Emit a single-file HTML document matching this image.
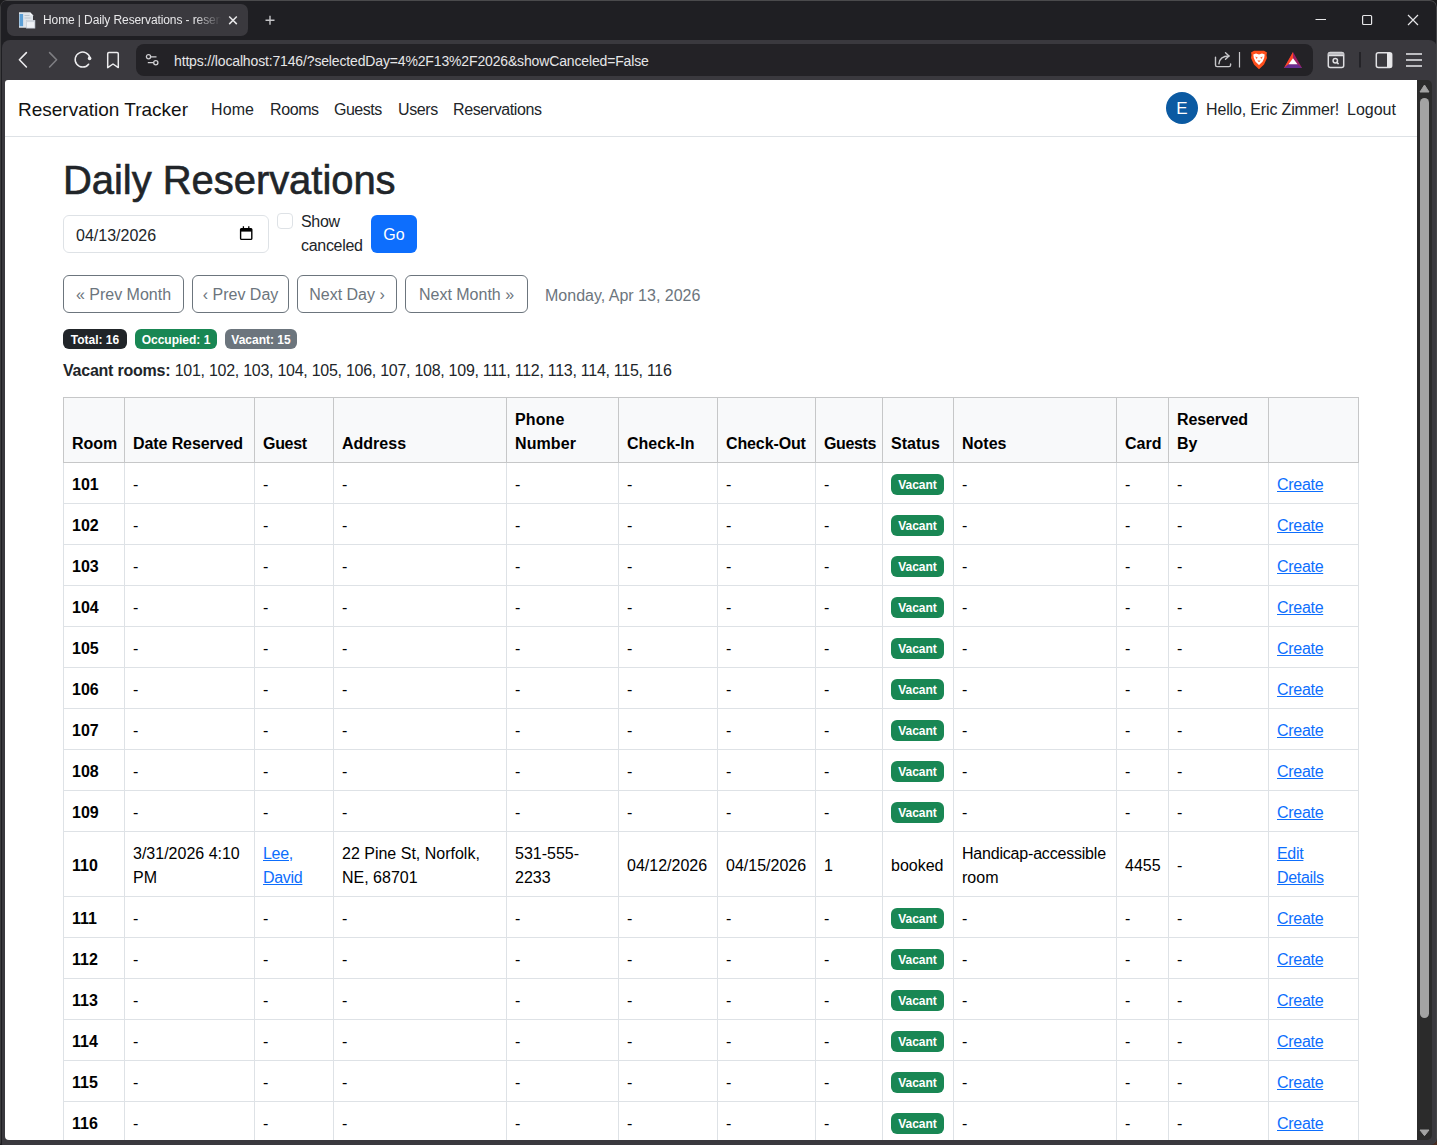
<!DOCTYPE html><html><head><meta charset="utf-8"><title>Daily Reservations</title><style>
*{box-sizing:border-box;margin:0;padding:0}
html,body{width:1437px;height:1145px;overflow:hidden;background:#1b1b1d;font-family:"Liberation Sans",sans-serif;}
.abs{position:absolute}
#win{position:absolute;left:0;top:0;width:1437px;height:1145px;background:#1f1f23;border-radius:7px 7px 7px 3px;overflow:hidden}
#wb{position:absolute;left:0;top:0;width:1437px;height:1145px;border-top:1px solid #4a4a4c;border-left:1px solid #3c3c3e;border-right:1px solid #444447;border-top-left-radius:6px;border-top-right-radius:7px;border-bottom-right-radius:7px;pointer-events:none}
#tab{position:absolute;left:7px;top:4px;width:241px;height:32px;background:#3a393e;border-radius:7px;}
#tabtitle{position:absolute;left:43px;top:13px;font-size:12px;line-height:14px;color:#e8e8ea;white-space:nowrap;width:178px;overflow:hidden;letter-spacing:-0.1px;
 -webkit-mask-image:linear-gradient(to right,#000 152px,transparent 178px);}
#toolbar{position:absolute;left:2px;top:40px;width:1435px;height:1105px;background:#3a393e;border-top-left-radius:8px;border-top-right-radius:8px;}
#url{position:absolute;left:136px;top:44px;width:1177px;height:32px;background:#232226;border-radius:8px;}
#urltext{position:absolute;left:174px;top:53px;font-size:14px;color:#e6e6e8;white-space:nowrap;letter-spacing:-0.15px}
#content{position:absolute;left:5px;top:80px;width:1412px;height:1060px;background:#fff;border-top-left-radius:3px;border-bottom-left-radius:4px;overflow:hidden}
#sb{position:absolute;left:1417px;top:80px;width:15px;height:1060px;background:#2b2b2b;border-top-right-radius:5px;border-bottom-right-radius:5px}
#thumb{position:absolute;left:3px;top:18px;width:9px;height:920px;background:#a3a3a3;border-radius:5px}
.page{position:absolute;left:-5px;top:-80px;width:1437px;height:1145px;color:#212529;font-size:16px;}
.nav a{position:absolute;top:101px;font-size:16px;color:#212529;text-decoration:none;white-space:nowrap}
.btn{position:absolute;border:1px solid #6c757d;border-radius:6px;color:#6c757d;font-size:16px;text-align:center;line-height:34px;padding-top:2px;white-space:nowrap}
.badge{position:absolute;border-radius:6px;color:#fff;font-size:12px;font-weight:bold;text-align:center;line-height:18px;padding-top:2px;height:20px;white-space:nowrap}
table{position:absolute;left:63px;top:397px;width:1296px;border-collapse:collapse;table-layout:fixed;font-size:16px;color:#000}
.t{position:relative;top:2px;display:inline-block;white-space:nowrap}
td,th{border:1px solid #dee2e6;padding:0 8px;vertical-align:middle;line-height:24px;text-align:left;}
th{background:#f8f9fa;border-color:#c6c7c8;vertical-align:bottom;padding:8px;font-weight:bold}
td{height:41px}
td.rn{font-weight:bold}
a.lk{color:#0d6efd;text-decoration:underline;text-underline-offset:1px;letter-spacing:-0.3px}
.vac{display:inline-block;position:relative;top:1px;padding-top:1px;background:#198754;color:#fff;font-size:12px;font-weight:bold;border-radius:6px;height:21px;line-height:20px;width:53px;text-align:center;vertical-align:middle}
</style></head><body>
<div class="abs" style="left:1423px;top:1131px;width:14px;height:14px;background:#4a2c20"></div><div id="win">
<div id="tab"></div>
<svg class="abs" style="left:18px;top:12px" width="18" height="17" viewBox="0 0 18 17">
<path d="M1 0.3H12L15 3.3V15.8H1Z" fill="#dfe4ea"/><path d="M12 0.3V3.3H15Z" fill="#f5f7fa"/>
<rect x="1.5" y="2" width="3.6" height="12.2" fill="#5b9fd6"/>
<rect x="6.5" y="3" width="5" height="1" fill="#b9c2cc"/><rect x="6.5" y="5.5" width="6" height="1" fill="#b9c2cc"/>
<rect x="8.6" y="8.5" width="8.3" height="7.6" fill="#eef1f5" stroke="#c3cbd4" stroke-width="0.7"/><rect x="8.6" y="8.5" width="8.3" height="1.6" fill="#cfd6de"/>
</svg>
<div id="tabtitle">Home | Daily Reservations - reservation</div>
<svg class="abs" style="left:228px;top:15px" width="10" height="10" viewBox="0 0 10 10"><path d="M1.2 1.5L8.8 9.1M8.8 1.5L1.2 9.1" stroke="#e6e6e8" stroke-width="1.5"/></svg>
<svg class="abs" style="left:265px;top:15px" width="11" height="11" viewBox="0 0 11 11"><path d="M5 0.8V9.8M0.5 5.3H9.5" stroke="#c4c4c7" stroke-width="1.4"/></svg>
<svg class="abs" style="left:1310px;top:10px" width="120" height="20" viewBox="0 0 120 20">
<path d="M5.5 9.5H16" stroke="#e6e6e8" stroke-width="1.2"/>
<rect x="52.6" y="5.5" width="9" height="9" rx="1" fill="none" stroke="#e6e6e8" stroke-width="1.2"/>
<path d="M98 5L108 15M108 5L98 15" stroke="#e6e6e8" stroke-width="1.2"/></svg>
<div id="toolbar"></div>
<div id="url"></div>
<svg class="abs" style="left:14px;top:48px" width="115" height="24" viewBox="0 0 115 24">
<path d="M12.4 4.6L5.4 11.8L12.4 19" fill="none" stroke="#ececee" stroke-width="1.6" stroke-linecap="round" stroke-linejoin="round"/>
<path d="M35.6 4.6L42.6 11.8L35.6 19" fill="none" stroke="#7e7e82" stroke-width="1.6" stroke-linecap="round" stroke-linejoin="round"/>
<path d="M76 10.04A7.5 7.5 0 1 0 74.6 16.2" fill="none" stroke="#ececee" stroke-width="1.5" stroke-linecap="round"/><circle cx="75.6" cy="10.4" r="1.8" fill="#ececee"/>
<path d="M93.7 5.7Q93.7 4.5 94.9 4.5H103.1Q104.3 4.5 104.3 5.7V19.6L99 16L93.7 19.6Z" fill="none" stroke="#ececee" stroke-width="1.5" stroke-linejoin="round"/>
</svg>
<svg class="abs" style="left:144px;top:51px" width="16" height="18" viewBox="0 0 16 18">
<circle cx="4.5" cy="5.8" r="2.1" fill="none" stroke="#d0d0d3" stroke-width="1.3"/><path d="M6.6 5.8H12.5" stroke="#d0d0d3" stroke-width="1.3"/>
<circle cx="11.8" cy="11.7" r="2.1" fill="none" stroke="#d0d0d3" stroke-width="1.3"/><path d="M3.8 11.7H9.7" stroke="#d0d0d3" stroke-width="1.3"/></svg>
<div id="urltext">https://localhost:7146/?selectedDay=4%2F13%2F2026&amp;showCanceled=False</div>
<svg class="abs" style="left:1210px;top:48px" width="220" height="24" viewBox="0 0 220 24">
<path d="M5.5 9.2V17Q5.5 18.6 7.1 18.6H19Q20.6 18.6 20.6 17V15.9" fill="none" stroke="#c8c8cb" stroke-width="1.4" stroke-linecap="round"/>
<path d="M8.9 15.9C9.3 11.2 12.5 8 19 8" fill="none" stroke="#c8c8cb" stroke-width="1.4" stroke-linecap="round"/><path d="M15.5 4.8L19 8L15.5 11.3" fill="none" stroke="#c8c8cb" stroke-width="1.4" stroke-linecap="round" stroke-linejoin="round"/>
<path d="M29.5 4V19.5" stroke="#c8c8cb" stroke-width="1.2"/>
<path d="M41 4.5L44 2.8L54 2.8L57 4.5L56.5 7L57 10L54 16.5L49 21.2L44 16.5L41 10L41.5 7Z" fill="#ff4f1c"/>
<path d="M43.3 6.5L46 5.6L49 6.4L52 5.6L54.7 6.5L54.2 10L52.5 13.8L49 17L45.5 13.8L43.8 10Z" fill="#fff"/>
<path d="M45.2 8.6L47.8 9.6L46.5 11ZM52.8 8.6L50.2 9.6L51.5 11ZM47.3 12.6H50.7L49 14.3Z" fill="#ff6a3d"/>
<path d="M83 3.9L92 19.9L74 19.9Z" fill="#9e1f63"/><path d="M83 3.9L83 10.3L78.5 16.3L74 19.9Z" fill="#ff4724"/><path d="M74 19.9L78.5 16.3H87.5L92 19.9Z" fill="#662d91"/><path d="M83 10.3L87.5 16.3H78.5Z" fill="#fff"/>
<rect x="118.3" y="4.6" width="15.4" height="14.8" rx="2" fill="none" stroke="#dedee1" stroke-width="1.5"/><rect x="118.3" y="4.6" width="15.4" height="3" fill="#bdbdc1"/><path d="M118.3 7.6H133.7" stroke="#dedee1" stroke-width="1.3"/>
<circle cx="125.3" cy="12.8" r="2.2" fill="none" stroke="#dedee1" stroke-width="1.5"/><path d="M126.9 14.4L128.6 16.1" stroke="#dedee1" stroke-width="1.5"/>
<path d="M150 4V19.5" stroke="#1f1f23" stroke-width="1.6"/>
<rect x="166.3" y="4.8" width="15.4" height="14.8" rx="2" fill="none" stroke="#e2e2e5" stroke-width="1.5"/><rect x="177" y="5" width="4.5" height="14.4" fill="#e8e8ea"/>
<path d="M196 6H212M196 12H212M196 18H212" stroke="#bdbdc1" stroke-width="1.9"/>
</svg>
<div id="content"><div class="page">
<div class="abs" style="left:0;top:136px;width:1437px;height:1px;background:#dee2e6;box-shadow:0 4px 12px rgba(0,0,0,.05)"></div>
<div class="abs" style="left:18px;top:99px;font-size:19px;white-space:nowrap;color:#111">Reservation Tracker</div>
<div class="nav">
<a style="left:211px;letter-spacing:0.1px">Home</a>
<a style="left:270px;letter-spacing:-0.4px">Rooms</a>
<a style="left:334px;letter-spacing:-0.5px">Guests</a>
<a style="left:398px;letter-spacing:-0.4px">Users</a>
<a style="left:453px;letter-spacing:-0.4px">Reservations</a>
</div>
<div class="abs" style="left:1166px;top:92px;width:32px;height:32px;border-radius:50%;background:#0b5aa2;color:#fff;font-size:17px;line-height:31px;padding-top:1px;text-align:center">E</div>
<div class="abs" style="left:1206px;top:101px;font-size:16px;letter-spacing:-0.15px;white-space:nowrap;color:#212529">Hello, Eric Zimmer!</div>
<div class="abs" style="left:1347px;top:101px;font-size:16px;white-space:nowrap;color:#212529">Logout</div>
<div class="abs" style="left:63px;top:156px;font-size:40px;line-height:48px;white-space:nowrap;color:#212529;-webkit-text-stroke:0.6px #212529;letter-spacing:-0.05px">Daily Reservations</div>
<div class="abs" style="left:63px;top:215px;width:206px;height:38px;border:1px solid #dee2e6;border-radius:6px"></div>
<div class="abs" style="left:76px;top:224px;font-size:16px;line-height:24px;white-space:nowrap">04/13/2026</div>
<svg class="abs" style="left:239px;top:226px" width="15" height="15" viewBox="0 0 15 15"><rect x="1.6" y="2.6" width="11.2" height="10.8" rx="1" fill="none" stroke="#000" stroke-width="1.4"/><rect x="1.6" y="2.6" width="11.2" height="3" fill="#000"/><path d="M4.4 0.3V3M9.8 0.3V3" stroke="#000" stroke-width="1.3"/></svg>
<div class="abs" style="left:277px;top:213px;width:16px;height:16px;border:1px solid #dee2e6;border-radius:4px"></div>
<div class="abs" style="left:301px;top:210px;font-size:16px;line-height:24px;white-space:nowrap;letter-spacing:-0.3px">Show<br>canceled</div>
<div class="abs" style="left:371px;top:215px;width:46px;height:38px;background:#0d6efd;border-radius:6px;color:#fff;font-size:16px;line-height:36px;padding-top:2px;text-align:center">Go</div>
<div class="btn" style="left:63px;top:275px;width:121px;height:38px">&laquo; Prev Month</div>
<div class="btn" style="left:192px;top:275px;width:97px;height:38px">&lsaquo; Prev Day</div>
<div class="btn" style="left:297px;top:275px;width:100px;height:38px">Next Day &rsaquo;</div>
<div class="btn" style="left:405px;top:275px;width:123px;height:38px">Next Month &raquo;</div>
<div class="abs" style="left:545px;top:284px;font-size:16px;line-height:24px;color:#6c757d;white-space:nowrap">Monday, Apr 13, 2026</div>
<div class="badge" style="left:63px;top:329px;width:64px;background:#212529">Total: 16</div>
<div class="badge" style="left:135px;top:329px;width:82px;background:#198754">Occupied: 1</div>
<div class="badge" style="left:225px;top:329px;width:72px;background:#6c757d">Vacant: 15</div>
<div class="abs" style="left:63px;top:359px;font-size:16px;line-height:24px;white-space:nowrap"><b style="letter-spacing:-0.23px">Vacant rooms:</b> <span style="letter-spacing:-0.27px">101, 102, 103, 104, 105, 106, 107, 108, 109, 111, 112, 113, 114, 115, 116</span></div>
<table><colgroup><col style="width:61px"><col style="width:130px"><col style="width:79px"><col style="width:173px"><col style="width:112px"><col style="width:99px"><col style="width:98px"><col style="width:67px"><col style="width:71px"><col style="width:163px"><col style="width:52px"><col style="width:100px"><col style="width:90px"></colgroup><thead><tr><th><span class="t" style="letter-spacing:0px">Room</span></th><th><span class="t" style="letter-spacing:-0.1px">Date Reserved</span></th><th><span class="t" style="letter-spacing:-0.3px">Guest</span></th><th><span class="t" style="letter-spacing:0px">Address</span></th><th><span class="t" style="letter-spacing:0.1px">Phone<br>Number</span></th><th><span class="t" style="letter-spacing:0px">Check-In</span></th><th><span class="t" style="letter-spacing:-0.12px">Check-Out</span></th><th><span class="t" style="letter-spacing:-0.35px">Guests</span></th><th><span class="t" style="letter-spacing:0px">Status</span></th><th><span class="t" style="letter-spacing:0px">Notes</span></th><th><span class="t" style="letter-spacing:0px">Card</span></th><th><span class="t" style="letter-spacing:-0.15px">Reserved<br>By</span></th><th></th></tr></thead><tbody><tr><td class="rn"><span class="t">101</span></td><td><span class="t">-</span></td><td><span class="t">-</span></td><td><span class="t">-</span></td><td><span class="t">-</span></td><td><span class="t">-</span></td><td><span class="t">-</span></td><td><span class="t">-</span></td><td><span class="vac">Vacant</span></td><td><span class="t">-</span></td><td><span class="t">-</span></td><td><span class="t">-</span></td><td><span class="t"><a class="lk">Create</a></span></td></tr><tr><td class="rn"><span class="t">102</span></td><td><span class="t">-</span></td><td><span class="t">-</span></td><td><span class="t">-</span></td><td><span class="t">-</span></td><td><span class="t">-</span></td><td><span class="t">-</span></td><td><span class="t">-</span></td><td><span class="vac">Vacant</span></td><td><span class="t">-</span></td><td><span class="t">-</span></td><td><span class="t">-</span></td><td><span class="t"><a class="lk">Create</a></span></td></tr><tr><td class="rn"><span class="t">103</span></td><td><span class="t">-</span></td><td><span class="t">-</span></td><td><span class="t">-</span></td><td><span class="t">-</span></td><td><span class="t">-</span></td><td><span class="t">-</span></td><td><span class="t">-</span></td><td><span class="vac">Vacant</span></td><td><span class="t">-</span></td><td><span class="t">-</span></td><td><span class="t">-</span></td><td><span class="t"><a class="lk">Create</a></span></td></tr><tr><td class="rn"><span class="t">104</span></td><td><span class="t">-</span></td><td><span class="t">-</span></td><td><span class="t">-</span></td><td><span class="t">-</span></td><td><span class="t">-</span></td><td><span class="t">-</span></td><td><span class="t">-</span></td><td><span class="vac">Vacant</span></td><td><span class="t">-</span></td><td><span class="t">-</span></td><td><span class="t">-</span></td><td><span class="t"><a class="lk">Create</a></span></td></tr><tr><td class="rn"><span class="t">105</span></td><td><span class="t">-</span></td><td><span class="t">-</span></td><td><span class="t">-</span></td><td><span class="t">-</span></td><td><span class="t">-</span></td><td><span class="t">-</span></td><td><span class="t">-</span></td><td><span class="vac">Vacant</span></td><td><span class="t">-</span></td><td><span class="t">-</span></td><td><span class="t">-</span></td><td><span class="t"><a class="lk">Create</a></span></td></tr><tr><td class="rn"><span class="t">106</span></td><td><span class="t">-</span></td><td><span class="t">-</span></td><td><span class="t">-</span></td><td><span class="t">-</span></td><td><span class="t">-</span></td><td><span class="t">-</span></td><td><span class="t">-</span></td><td><span class="vac">Vacant</span></td><td><span class="t">-</span></td><td><span class="t">-</span></td><td><span class="t">-</span></td><td><span class="t"><a class="lk">Create</a></span></td></tr><tr><td class="rn"><span class="t">107</span></td><td><span class="t">-</span></td><td><span class="t">-</span></td><td><span class="t">-</span></td><td><span class="t">-</span></td><td><span class="t">-</span></td><td><span class="t">-</span></td><td><span class="t">-</span></td><td><span class="vac">Vacant</span></td><td><span class="t">-</span></td><td><span class="t">-</span></td><td><span class="t">-</span></td><td><span class="t"><a class="lk">Create</a></span></td></tr><tr><td class="rn"><span class="t">108</span></td><td><span class="t">-</span></td><td><span class="t">-</span></td><td><span class="t">-</span></td><td><span class="t">-</span></td><td><span class="t">-</span></td><td><span class="t">-</span></td><td><span class="t">-</span></td><td><span class="vac">Vacant</span></td><td><span class="t">-</span></td><td><span class="t">-</span></td><td><span class="t">-</span></td><td><span class="t"><a class="lk">Create</a></span></td></tr><tr><td class="rn"><span class="t">109</span></td><td><span class="t">-</span></td><td><span class="t">-</span></td><td><span class="t">-</span></td><td><span class="t">-</span></td><td><span class="t">-</span></td><td><span class="t">-</span></td><td><span class="t">-</span></td><td><span class="vac">Vacant</span></td><td><span class="t">-</span></td><td><span class="t">-</span></td><td><span class="t">-</span></td><td><span class="t"><a class="lk">Create</a></span></td></tr><tr style="height:65px"><td class="rn"><span class="t">110</span></td><td><span class="t">3/31/2026 4:10<br>PM</span></td><td><span class="t"><a class="lk">Lee,</a><br><a class="lk">David</a></span></td><td><span class="t">22 Pine St, Norfolk,<br>NE, 68701</span></td><td><span class="t">531-555-<br>2233</span></td><td><span class="t">04/12/2026</span></td><td><span class="t">04/15/2026</span></td><td><span class="t">1</span></td><td><span class="t">booked</span></td><td><span class="t"><span style="letter-spacing:-0.2px">Handicap-accessible</span><br>room</span></td><td><span class="t">4455</span></td><td><span class="t">-</span></td><td><span class="t"><a class="lk">Edit</a><br><a class="lk">Details</a></span></td></tr><tr><td class="rn"><span class="t">111</span></td><td><span class="t">-</span></td><td><span class="t">-</span></td><td><span class="t">-</span></td><td><span class="t">-</span></td><td><span class="t">-</span></td><td><span class="t">-</span></td><td><span class="t">-</span></td><td><span class="vac">Vacant</span></td><td><span class="t">-</span></td><td><span class="t">-</span></td><td><span class="t">-</span></td><td><span class="t"><a class="lk">Create</a></span></td></tr><tr><td class="rn"><span class="t">112</span></td><td><span class="t">-</span></td><td><span class="t">-</span></td><td><span class="t">-</span></td><td><span class="t">-</span></td><td><span class="t">-</span></td><td><span class="t">-</span></td><td><span class="t">-</span></td><td><span class="vac">Vacant</span></td><td><span class="t">-</span></td><td><span class="t">-</span></td><td><span class="t">-</span></td><td><span class="t"><a class="lk">Create</a></span></td></tr><tr><td class="rn"><span class="t">113</span></td><td><span class="t">-</span></td><td><span class="t">-</span></td><td><span class="t">-</span></td><td><span class="t">-</span></td><td><span class="t">-</span></td><td><span class="t">-</span></td><td><span class="t">-</span></td><td><span class="vac">Vacant</span></td><td><span class="t">-</span></td><td><span class="t">-</span></td><td><span class="t">-</span></td><td><span class="t"><a class="lk">Create</a></span></td></tr><tr><td class="rn"><span class="t">114</span></td><td><span class="t">-</span></td><td><span class="t">-</span></td><td><span class="t">-</span></td><td><span class="t">-</span></td><td><span class="t">-</span></td><td><span class="t">-</span></td><td><span class="t">-</span></td><td><span class="vac">Vacant</span></td><td><span class="t">-</span></td><td><span class="t">-</span></td><td><span class="t">-</span></td><td><span class="t"><a class="lk">Create</a></span></td></tr><tr><td class="rn"><span class="t">115</span></td><td><span class="t">-</span></td><td><span class="t">-</span></td><td><span class="t">-</span></td><td><span class="t">-</span></td><td><span class="t">-</span></td><td><span class="t">-</span></td><td><span class="t">-</span></td><td><span class="vac">Vacant</span></td><td><span class="t">-</span></td><td><span class="t">-</span></td><td><span class="t">-</span></td><td><span class="t"><a class="lk">Create</a></span></td></tr><tr><td class="rn"><span class="t">116</span></td><td><span class="t">-</span></td><td><span class="t">-</span></td><td><span class="t">-</span></td><td><span class="t">-</span></td><td><span class="t">-</span></td><td><span class="t">-</span></td><td><span class="t">-</span></td><td><span class="vac">Vacant</span></td><td><span class="t">-</span></td><td><span class="t">-</span></td><td><span class="t">-</span></td><td><span class="t"><a class="lk">Create</a></span></td></tr></tbody></table>
</div></div>
<div id="sb"><div id="thumb"></div></div>
<svg class="abs" style="left:1417px;top:80px" width="15" height="16" viewBox="0 0 15 16"><path d="M3 12L7.5 5L12 12Z" fill="#a3a3a3" stroke="#a3a3a3" stroke-width="1" stroke-linejoin="round"/></svg>
<svg class="abs" style="left:1417px;top:1124px" width="15" height="16" viewBox="0 0 15 16"><path d="M3 6L7.5 11.7L12 6Z" fill="#a3a3a3" stroke="#a3a3a3" stroke-width="1" stroke-linejoin="round"/></svg>
<div id="wb"></div>
</div></body></html>
